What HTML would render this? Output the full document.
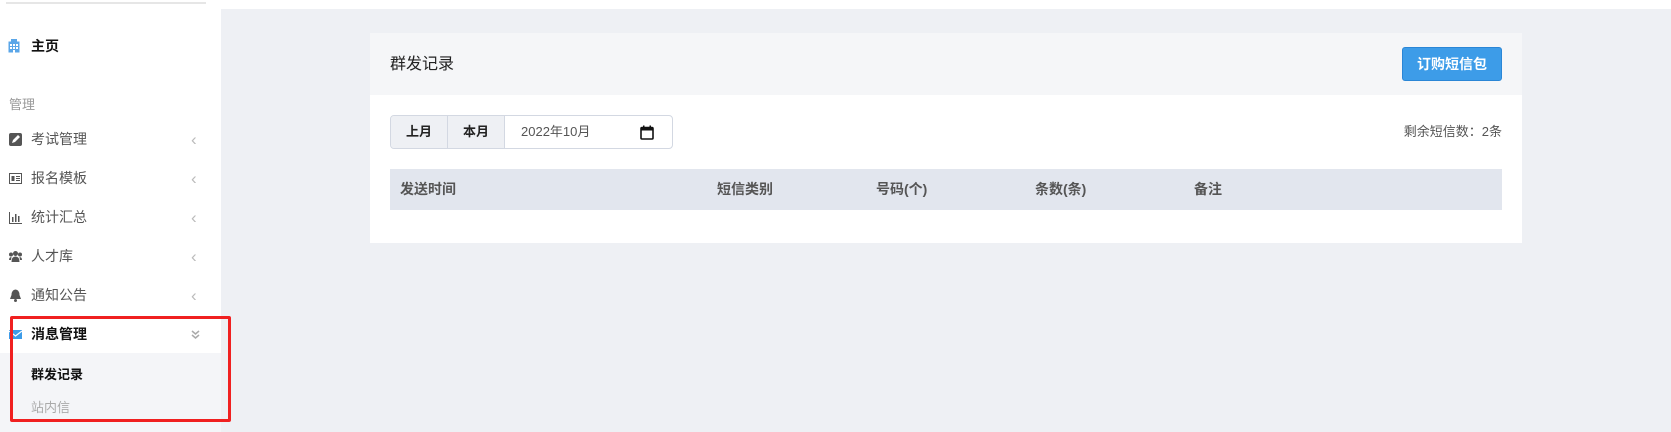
<!DOCTYPE html>
<html><head><meta charset="utf-8"><style>
*{margin:0;padding:0;box-sizing:border-box}
body{width:1671px;height:432px;overflow:hidden;background:#fff;font-family:"Liberation Sans","Noto Sans CJK SC",sans-serif;position:relative;color:#333}
.a{position:absolute}
.side{left:0;top:0;width:221px;height:432px;background:#fff}
.item{position:absolute;left:0;width:221px;height:39px;line-height:39px;font-size:14px;color:#555}
.item .ic{position:absolute;left:9px;top:13px;width:13px;height:13px}
.item .t{position:absolute;left:31px}
.item .ch{position:absolute;left:191px;color:#bbb;font-size:17px}
.main{left:221px;top:9px;width:1450px;height:423px;background:#eef0f4}
.card{left:370px;top:33px;width:1152px;height:210px;background:#fff}
.th{position:absolute;top:0;line-height:41px;font-size:14px;color:#555;font-weight:bold}
</style></head><body>
<div class="a side">
 <div class="a" style="left:6px;top:2px;width:200px;height:2px;background:#e6e6e6"></div>
 <svg class="a" style="left:8px;top:39px" width="12" height="14" viewBox="0 0 12 14"><rect x="0.5" y="2.5" width="11" height="11" fill="#5aa6e8"/><rect x="3" y="0" width="6" height="3" fill="#5aa6e8"/><g fill="#fff"><rect x="2" y="5" width="2" height="2"/><rect x="5" y="5" width="2" height="2"/><rect x="8" y="5" width="2" height="2"/><rect x="2" y="8" width="2" height="2"/><rect x="5" y="8" width="2" height="2"/><rect x="8" y="8" width="2" height="2"/><rect x="5" y="11" width="2" height="3"/></g></svg>
 <div class="a" style="left:31px;top:36px;font-size:14px;font-weight:bold;color:#111;line-height:20px">主页</div>
 <div class="a" style="left:9px;top:96px;font-size:13px;color:#999;line-height:18px">管理</div>
 <div class="item" style="top:120px"><svg class="ic" viewBox="0 0 13 13"><rect width="13" height="13" rx="2" fill="#555"/><path d="M3 10 L4 7 L9 2 L11 4 L6 9 Z" fill="#fff"/></svg><span class="t">考试管理</span><span class="ch">&lsaquo;</span></div>
 <div class="item" style="top:159px"><svg class="ic" viewBox="0 0 13 13"><rect x="0.5" y="1.5" width="12" height="10" fill="none" stroke="#555"/><rect x="2.5" y="4" width="3" height="5" fill="#555"/><rect x="7" y="4" width="4" height="1" fill="#555"/><rect x="7" y="6" width="4" height="1" fill="#555"/><rect x="7" y="8" width="4" height="1" fill="#555"/></svg><span class="t">报名模板</span><span class="ch">&lsaquo;</span></div>
 <div class="item" style="top:198px"><svg class="ic" viewBox="0 0 13 13"><path d="M0.5 1V12.5H13" fill="none" stroke="#555"/><rect x="3" y="6" width="1.5" height="5" fill="#555"/><rect x="6" y="3" width="1.5" height="8" fill="#555"/><rect x="9" y="5" width="1.5" height="6" fill="#555"/></svg><span class="t">统计汇总</span><span class="ch">&lsaquo;</span></div>
 <div class="item" style="top:237px"><svg class="ic" viewBox="0 0 13 13"><circle cx="6.5" cy="3.5" r="2.5" fill="#555"/><circle cx="2" cy="4.5" r="2" fill="#555"/><circle cx="11" cy="4.5" r="2" fill="#555"/><path d="M2.5 12 Q2.5 6.5 6.5 6.5 Q10.5 6.5 10.5 12Z M0 10 Q0 7 2.5 7 L2 10Z M13 10 Q13 7 10.5 7 L11 10Z" fill="#555"/></svg><span class="t">人才库</span><span class="ch">&lsaquo;</span></div>
 <div class="item" style="top:276px"><svg class="ic" viewBox="0 0 13 13"><path d="M6.5 0.5 Q2.5 1 2.5 6 L1 10 L12 10 L10.5 6 Q10.5 1 6.5 0.5Z" fill="#555"/><circle cx="6.5" cy="11.5" r="1.5" fill="#555"/></svg><span class="t">通知公告</span><span class="ch">&lsaquo;</span></div>
 <div class="item" style="top:315px;color:#111;font-weight:bold"><svg class="ic" viewBox="0 0 13 13"><rect y="2" width="13" height="9" fill="#3d9ce8"/><path d="M0 3 L6.5 8 L13 3" fill="none" stroke="#fff" stroke-width="1.2"/></svg><span class="t">消息管理</span><svg class="a" style="left:191px;top:15px" width="9" height="9" viewBox="0 0 9 9"><path d="M1 1 L4.5 4 L8 1 M1 5 L4.5 8 L8 5" fill="none" stroke="#aaa" stroke-width="1.5"/></svg></div>
 <div class="a" style="left:0;top:353px;width:221px;height:79px;background:#f4f5f8"></div>
 <div class="a" style="left:31px;top:366px;font-size:13px;font-weight:bold;color:#111;line-height:18px">群发记录</div>
 <div class="a" style="left:31px;top:399px;font-size:13px;color:#aaa;line-height:18px">站内信</div>
</div>
<div class="a main"></div>
<div class="a card">
 <div class="a" style="left:0;top:0;width:1152px;height:62px;background:#f5f6f8"></div>
 <div class="a" style="left:20px;top:21px;font-size:16px;color:#222;line-height:22px">群发记录</div>
 <div class="a" style="left:1032px;top:14px;width:100px;height:34px;background:#3d9ce8;border:1px solid #2a86d6;border-radius:3px;color:#fff;font-size:14px;font-weight:bold;text-align:center;line-height:32px">订购短信包</div>
 <div class="a" style="left:20px;top:82px;width:283px;height:34px;border:1px solid #d3d8e2;border-radius:4px;overflow:hidden;background:#fff">
  <div class="a" style="left:0;top:0;width:57px;height:32px;background:#eef0f4;border-right:1px solid #d3d8e2;text-align:center;line-height:32px;font-size:13px;font-weight:bold;color:#222">上月</div>
  <div class="a" style="left:57px;top:0;width:57px;height:32px;background:#eef0f4;border-right:1px solid #d3d8e2;text-align:center;line-height:32px;font-size:13px;font-weight:bold;color:#222">本月</div>
  <div class="a" style="left:130px;top:0;line-height:32px;font-size:13px;color:#555">2022年10月</div>
  <svg class="a" style="left:249px;top:9px" width="14" height="15" viewBox="0 0 14 15"><rect x="1" y="2.5" width="12" height="11.5" rx="1" fill="none" stroke="#111" stroke-width="1.6"/><rect x="1" y="2.5" width="12" height="3" fill="#111"/><rect x="3" y="0.5" width="1.5" height="3" fill="#111"/><rect x="9.5" y="0.5" width="1.5" height="3" fill="#111"/></svg>
 </div>
 <div class="a" style="right:20px;top:89px;font-size:13px;color:#555;line-height:20px">剩余短信数：2条</div>
 <div class="a" style="left:20px;top:136px;width:1112px;height:41px;background:#e2e6ee">
  <span class="th" style="left:10px">发送时间</span>
  <span class="th" style="left:327px">短信类别</span>
  <span class="th" style="left:486px">号码(个)</span>
  <span class="th" style="left:645px">条数(条)</span>
  <span class="th" style="left:804px">备注</span>
 </div>
</div>
<div class="a" style="left:10px;top:316px;width:221px;height:106px;border:3px solid #f02020;border-radius:2px"></div>
</body></html>
